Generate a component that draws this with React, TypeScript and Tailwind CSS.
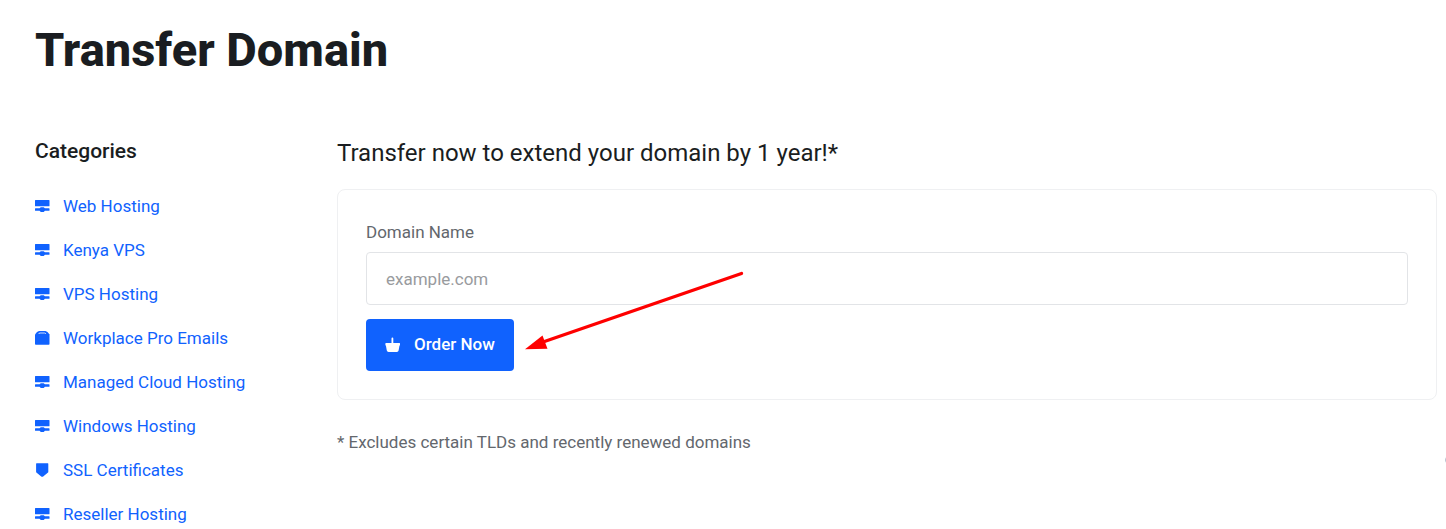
import { useState } from "react";

type IconName = "server" | "mail" | "shield";

const categories: { label: string; icon: IconName }[] = [
  { label: "Web Hosting", icon: "server" },
  { label: "Kenya VPS", icon: "server" },
  { label: "VPS Hosting", icon: "server" },
  { label: "Workplace Pro Emails", icon: "mail" },
  { label: "Managed Cloud Hosting", icon: "server" },
  { label: "Windows Hosting", icon: "server" },
  { label: "SSL Certificates", icon: "shield" },
  { label: "Reseller Hosting", icon: "server" },
];

function CategoryIcon({ name }: { name: IconName }) {
  return (
    <svg className="w-4 h-4 shrink-0" viewBox="0 0 16 16" fill="currentColor" aria-hidden="true">
      {name === "server" && (
        <path d="M.5 2h13.500q.5 0 .5.5v5.200q0 .5-.5.5H.5q-.5 0-.5-.5V2.500Q0 2 .5 2zM5.800 9.300h2.900l1.200 1h4.100q.5 0 .5.5v1.400q0 .5-.5.5H9.900l-1.200 1.300H5.800L4.600 12.700H.5q-.5 0-.5-.5v-1.400q0-.5.5-.5h4.100z" />
      )}
      {name === "mail" && (
        <>
          <path d="M4 1h6.500q2 .1 4 3.600V14q0 .8-.8.8H.8Q0 14.800 0 14V4.600Q2 1.100 4 1z" />
          <path d="M3.600 4Q4 3 5 3h4.500q1 0 1.400 1" fill="none" stroke="#fff" strokeOpacity=".8" strokeWidth="1" />
        </>
      )}
      {name === "shield" && (
        <path d="M1.600 1.300h11.200q.5 0 .5.5v8q0 .5-.3.800L8.200 14.500q-1 .7-2 0L1.400 10.600q-.3-.3-.3-.8v-8q0-.5.5-.5z" />
      )}
    </svg>
  );
}

function BasketIcon() {
  return (
    <svg className="w-4 h-4 shrink-0" viewBox="0 0 16 16" fill="currentColor" aria-hidden="true">
      <path d="M7.400.5q.9 0 .9.900V6h6.200q.5 0 .5.5v1.400q0 .5-.5.5L13.600 13.600q-.3 1.400-1.700 1.400H3.500q-1.400 0-1.700-1.400L.9 8.400q-.5 0-.5-.5V6.500Q.4 6 .9 6h5.600V1.400q0-.9.9-.9z" />
    </svg>
  );
}

export default function App() {
  const [domain, setDomain] = useState("");

  return (
    <div className="relative overflow-hidden bg-white pt-[21px] pr-[9px] pl-[35px] font-[Roboto,sans-serif] text-[#1a1d21]">
      <h1 className="text-[47px] leading-[58px] font-extrabold">Transfer Domain</h1>

      <div className="mt-[57px] flex">
        <aside className="w-[302px] shrink-0">
          <h2 className="text-[21px] leading-[30px] font-medium">Categories</h2>
          <nav className="mt-[18px]">
            <ul>
              {categories.map((category) => (
                <li key={category.label}>
                  <a href="#" className="flex h-11 items-center gap-3 text-[17px] leading-6 text-[#1062fe]">
                    <CategoryIcon name={category.icon} />
                    {category.label}
                  </a>
                </li>
              ))}
            </ul>
          </nav>
        </aside>

        <main className="min-w-0 grow">
          <h2 className="text-[24px] leading-[34px]">Transfer now to extend your domain by 1 year!*</h2>

          <form
            className="relative mt-[19px] rounded-lg border border-[#eff0f2] p-7"
            onSubmit={(e) => e.preventDefault()}
          >
            <label htmlFor="domain" className="block text-[17px] leading-7 text-[#63676d]">
              Domain Name
            </label>
            <input
              id="domain"
              type="text"
              value={domain}
              onChange={(e) => setDomain(e.target.value)}
              placeholder="example.com"
              className="mt-[6px] block h-[53px] w-full rounded border border-[#e2e4e7] px-[19px] text-[17px] placeholder:text-[#999b9e]"
            />
            <button
              type="submit"
              className="mt-[14px] flex h-[52px] items-center gap-[13px] rounded bg-[#1062fe] px-[19px] text-[17px] font-medium text-white"
            >
              <BasketIcon />
              Order Now
            </button>

            {/* arrow pointing at the order button */}
            <svg
              className="pointer-events-none absolute top-20 left-[187px] h-[84px] w-[224px]"
              viewBox="0 0 224 84"
              aria-hidden="true"
            >
              <path d="M216.500 3.500 18 72" stroke="#fe0000" strokeWidth="3.400" strokeLinecap="round" />
              <path d="M0 79.300 17.500 65.500 22.500 78.800z" fill="#fe0000" />
            </svg>
          </form>

          <p className="mt-[30px] text-[17px] leading-6 text-[#63676d]">
            * Excludes certain TLDs and recently renewed domains
          </p>
        </main>
      </div>

      {/* edge of the off-screen chat bubble */}
      <span className="absolute top-[455px] -right-[9px] h-2.5 w-2.5 rounded-full border border-[#b9c3d0]" />
    </div>
  );
}
